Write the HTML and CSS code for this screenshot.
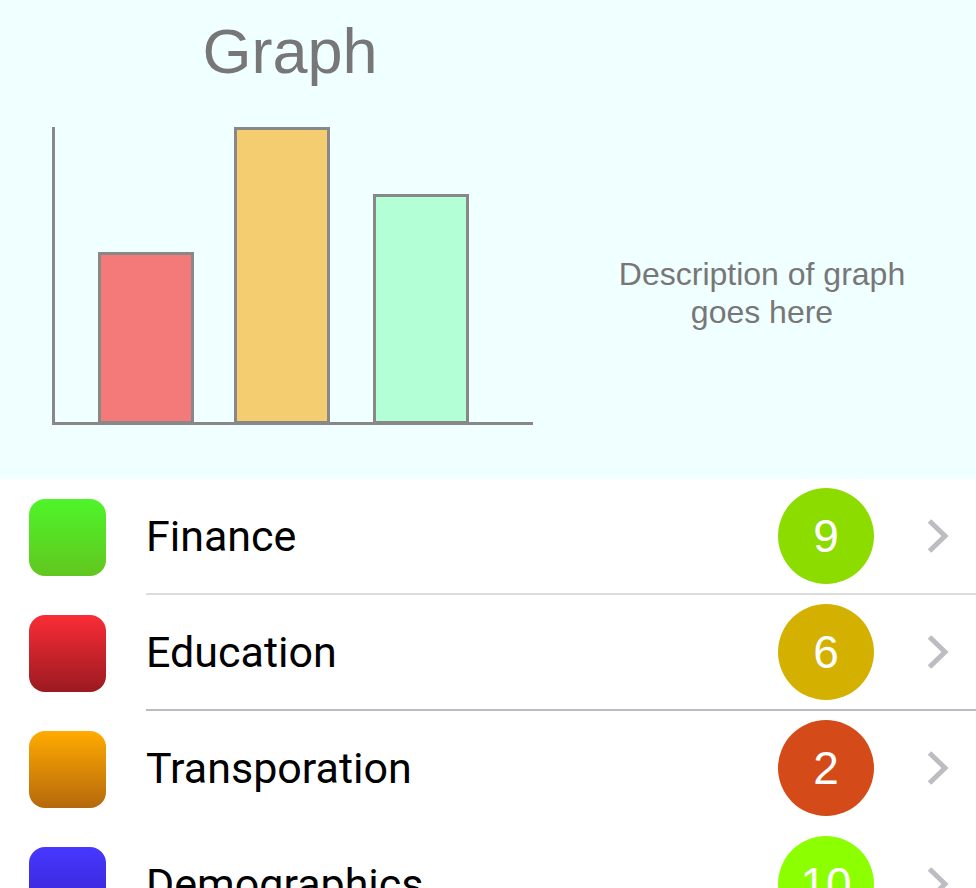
FILE: index.html
```html
<!DOCTYPE html>
<html lang="en">
<head>
    <meta charset="UTF-8">
    <meta name="viewport" content="width=device-width, initial-scale=1.0">
    <title>Graph</title>
    <link rel="stylesheet" href="styles.css">
</head>
<body>

    <div class="graph-panel">
        <div class="graph-col">
            <h1 class="graph-title">Graph</h1>
            <svg class="chart" width="560" height="380" viewBox="0 0 560 380">
                <line x1="53.5" y1="27" x2="53.5" y2="325" stroke="#888" stroke-width="3"/>
                <line x1="52" y1="323.5" x2="533" y2="323.5" stroke="#888" stroke-width="3"/>
                <rect x="99.5" y="153.5" width="93" height="169" fill="#f47a7a" stroke="#888" stroke-width="3"/>
                <rect x="235.5" y="28.5" width="93" height="294" fill="#f4cd70" stroke="#888" stroke-width="3"/>
                <rect x="374.5" y="95.5" width="93" height="227" fill="#b3ffd6" stroke="#888" stroke-width="3"/>
            </svg>
        </div>
        <div class="graph-desc">
            <p>Description of graph<br>goes here</p>
        </div>
    </div>

    <ul class="category-list">
        <li class="category-row">
            <span class="category-icon icon-green"></span>
            <div class="category-body">
                <span class="category-name">Finance</span>
                <span class="count-badge badge-lime">9</span>
                <svg class="chevron" width="22" height="34" viewBox="0 0 22 34"><polyline points="2.5,2 18,17 2.5,32" fill="none" stroke="#bcbcc2" stroke-width="5"/></svg>
            </div>
        </li>
        <li class="category-row">
            <span class="category-icon icon-red"></span>
            <div class="category-body sep-dark">
                <span class="category-name">Education</span>
                <span class="count-badge badge-gold">6</span>
                <svg class="chevron" width="22" height="34" viewBox="0 0 22 34"><polyline points="2.5,2 18,17 2.5,32" fill="none" stroke="#bcbcc2" stroke-width="5"/></svg>
            </div>
        </li>
        <li class="category-row">
            <span class="category-icon icon-orange"></span>
            <div class="category-body sep-none">
                <span class="category-name">Transporation</span>
                <span class="count-badge badge-rust">2</span>
                <svg class="chevron" width="22" height="34" viewBox="0 0 22 34"><polyline points="2.5,2 18,17 2.5,32" fill="none" stroke="#bcbcc2" stroke-width="5"/></svg>
            </div>
        </li>
        <li class="category-row">
            <span class="category-icon icon-blue"></span>
            <div class="category-body">
                <span class="category-name">Demographics</span>
                <span class="count-badge badge-neon">10</span>
                <svg class="chevron" width="22" height="34" viewBox="0 0 22 34"><polyline points="2.5,2 18,17 2.5,32" fill="none" stroke="#bcbcc2" stroke-width="5"/></svg>
            </div>
        </li>
    </ul>

</body>
</html>
```

FILE: styles.css
```css
body {
    margin: 0;
    font-family: "Liberation Sans", Arial, sans-serif;
    background-color: #fff;
}

.graph-panel {
    display: flex;
    height: 479px;
    background-color: #f0ffff;
}

.graph-col {
    width: 560px;
}

.graph-title {
    width: 480px;
    margin: 0 0 0 50px;
    padding: 20px 0 18px;
    font-size: 63px;
    line-height: 62px;
    font-weight: normal;
    color: #777;
    text-align: center;
}

.chart {
    display: block;
}

.graph-desc {
    flex: 1;
    display: flex;
    align-items: center;
    justify-content: center;
    padding: 106px 12px 0 0;
}

.graph-desc p {
    margin: 0;
    font-size: 32px;
    line-height: 38px;
    color: #777;
    text-align: center;
}

.category-list {
    list-style: none;
    margin: 0;
    padding: 0;
}

.category-row {
    display: flex;
    align-items: center;
    padding-left: 29px;
}

.category-icon {
    width: 77px;
    height: 77px;
    border-radius: 16px;
    margin-right: 40px;
    flex-shrink: 0;
}

.icon-green {
    background: linear-gradient(#4ef52a, #62c61f);
}

.icon-red {
    background: linear-gradient(#fa2d37, #9a1a20);
}

.icon-orange {
    background: linear-gradient(#ffab00, #b5680c);
}

.icon-blue {
    background: linear-gradient(#4638ff, #3520c8);
}

.category-body {
    flex: 1;
    display: flex;
    align-items: center;
    height: 114px;
    padding-right: 27px;
    border-bottom: 2px solid #dcdcdc;
}

.sep-dark {
    border-bottom-color: #bcbbc1;
}

.sep-none {
    border-bottom-color: transparent;
}

.category-name {
    flex: 1;
    font-family: Roboto, "Liberation Sans", sans-serif;
    font-size: 43px;
    color: #000;
}

.count-badge {
    width: 96px;
    height: 96px;
    border-radius: 50%;
    margin-right: 53px;
    display: flex;
    align-items: center;
    justify-content: center;
    font-size: 46px;
    color: #fff;
}

.badge-lime {
    background-color: #8cdc00;
}

.badge-gold {
    background-color: #d4b000;
}

.badge-rust {
    background-color: #d44a18;
}

.badge-neon {
    background-color: #8cff00;
}

.chevron {
    display: block;
}
```
